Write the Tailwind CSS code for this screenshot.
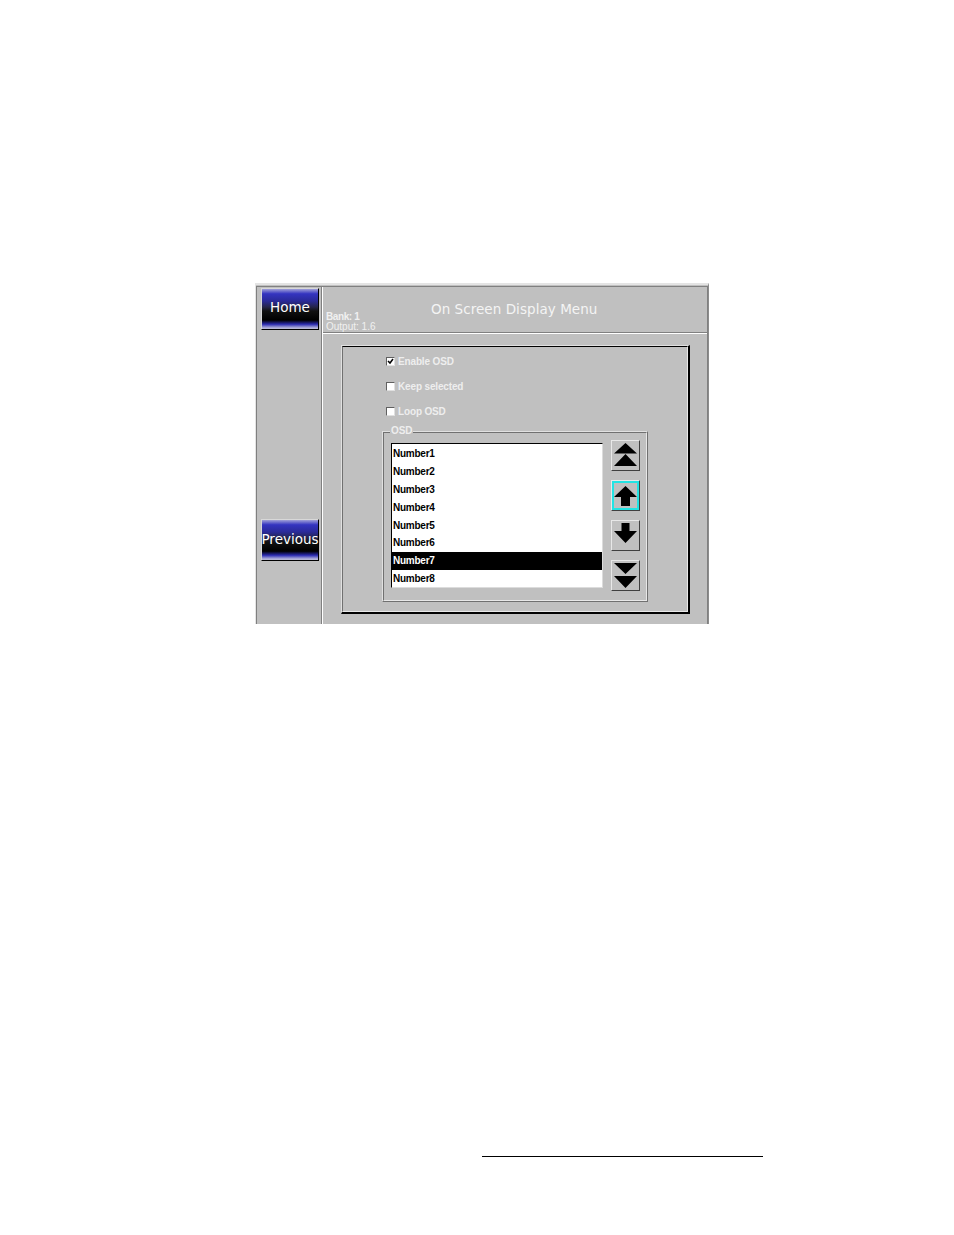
<!DOCTYPE html>
<html lang="en">
<head>
    <meta charset="UTF-8">
    <title>On Screen Display Menu</title>
    <script src="https://cdn.jsdelivr.net/npm/@tailwindcss/browser@4"></script>
</head>
<body class="bg-white w-[954px] h-[1235px] overflow-hidden font-['Liberation_Sans',sans-serif]">
    <div class="pt-[283px] pl-[255px]">
        <!-- outer window -->
        <div class="w-[454px] h-[341px] bg-[#c0c0c0] border-t-2 border-l border-r border-[#e4e4e4] border-r-[#8c8c8c] pt-px">
            <div class="h-full flex border-t border-l border-r border-[#808080]">
                <!-- sidebar -->
                <div class="w-[65px] h-full flex flex-col pl-[4px] pt-px border-r border-[#808080] shrink-0">
                    <div class="w-[58px] h-[42px] flex items-center justify-center pb-[3px] text-white font-['DejaVu_Sans',sans-serif] text-[13.5px] border border-[#d8d8d8] border-r-black border-b-black bg-[linear-gradient(#a0a0d8_0%,#3434c0_12%,#2a2a98_30%,#24244a_45%,#111_55%,#000_78%,#2a2ab0_88%,#a0a0d8_96%,#c0c0d8_100%)]">Home</div>
                    <div class="w-[58px] h-[42px] mt-[189px] flex items-center justify-center pb-[2px] text-white font-['DejaVu_Sans',sans-serif] text-[13.5px] border border-[#d8d8d8] border-r-black border-b-black bg-[linear-gradient(#a0a0d8_0%,#3434c0_12%,#2a2a98_30%,#24244a_45%,#111_55%,#000_78%,#2a2ab0_88%,#a0a0d8_96%,#c0c0d8_100%)]">Previous</div>
                </div>
                <div class="flex-1 border-l border-white flex flex-col">
                    <!-- header -->
                    <div class="h-[46px] flex border-b border-[#808080]">
                        <div class="w-[108px] pl-[3px] pt-[25px] text-[10px] leading-[10px] text-[#f0f0f0]">
                            <div class="font-bold tracking-[-0.4px]">Bank: 1</div>
                            <div>Output: 1.6</div>
                        </div>
                        <div class="pt-[13px] text-[13.5px] leading-[18px] tracking-[0.05px] text-[#f4f4f4] font-['DejaVu_Sans',sans-serif]">On Screen Display Menu</div>
                    </div>
                    <div class="border-t border-white pl-[18px] pt-[11px]">
                        <!-- settings panel -->
                        <div class="w-[349px] h-[269px] border border-[#e0e0e0] border-r-2 border-b-2 border-r-black border-b-black">
                            <div class="h-full border border-t-black border-l-[#707070] border-r-[#e8e8e8] border-b-[#e8e8e8] pl-[43px] pt-[9px]">
                                <div class="flex flex-col gap-[13px] text-[10px] leading-[12px] tracking-[-0.15px] font-bold text-[#eeeeee]">
                                    <label class="flex items-center gap-[3px]">
                                        <span class="w-[9px] h-[9px] -mt-px bg-white border border-[#606060] border-r-[#e0e0e0] border-b-[#e0e0e0] flex items-center justify-center">
                                            <svg class="w-[7px] h-[7px]" viewBox="0 0 7 7"><path d="M1 3l2 2 3-4" fill="none" stroke="#000" stroke-width="1.5"/></svg>
                                        </span>
                                        Enable OSD
                                    </label>
                                    <label class="flex items-center gap-[3px]">
                                        <span class="w-[9px] h-[9px] -mt-px bg-white border border-[#606060] border-r-[#e0e0e0] border-b-[#e0e0e0]"></span>
                                        Keep selected
                                    </label>
                                    <label class="flex items-center gap-[3px]">
                                        <span class="w-[9px] h-[9px] -mt-px bg-white border border-[#606060] border-r-[#e0e0e0] border-b-[#e0e0e0]"></span>
                                        Loop OSD
                                    </label>
                                </div>
                                <!-- OSD group box -->
                                <div class="relative mt-[13px] -ml-[4px] w-[266px] h-[171px] border border-[#e0e0e0] border-r-[#707070] border-b-[#707070]">
                                    <span class="absolute -top-[7px] left-[7px] px-[1px] bg-[#c0c0c0] text-[10px] leading-[12px] tracking-[-0.15px] font-bold text-[#eeeeee]">OSD</span>
                                    <div class="h-full border border-[#707070] border-r-[#e8e8e8] border-b-[#e8e8e8] flex pl-[7px] pt-[10px]">
                                        <!-- list -->
                                        <div class="w-[212px] h-[145px] pt-px bg-white border border-t-black border-l-black border-b-[#dcdcdc] border-r-[#dcdcdc] text-[10px] tracking-[-0.25px] font-bold text-black">
                                            <div class="h-[17.8px] flex items-center pl-px">Number1</div>
                                            <div class="h-[17.8px] flex items-center pl-px">Number2</div>
                                            <div class="h-[17.8px] flex items-center pl-px">Number3</div>
                                            <div class="h-[17.8px] flex items-center pl-px">Number4</div>
                                            <div class="h-[17.8px] flex items-center pl-px">Number5</div>
                                            <div class="h-[17.8px] flex items-center pl-px">Number6</div>
                                            <div class="h-[17.8px] flex items-center pl-px bg-black text-white">Number7</div>
                                            <div class="h-[17.8px] flex items-center pl-px">Number8</div>
                                        </div>
                                        <!-- move buttons -->
                                        <div class="ml-[8px] -mt-[3px] flex flex-col gap-[9px]">
                                            <button class="w-[29px] h-[31px] bg-[#c0c0c0] border border-[#e8e8e8] border-r-[#404040] border-b-[#404040]">
                                                <svg class="w-[27px] h-[29px]" viewBox="0 0 27 29"><path d="M13.5 2L25 12.5H2zM13.5 13L25 25H2z" fill="#000"/></svg>
                                            </button>
                                            <button class="w-[29px] h-[31px] bg-[#c0c0c0] border border-[#e8e8e8] border-r-[#404040] border-b-[#404040]">
                                                <span class="block h-full border-2 border-[#22e4e4]">
                                                    <svg class="w-[23px] h-[25px]" viewBox="0 0 23 25"><path d="M11.5 3L23 14H16V23H7V14H0z" fill="#000"/></svg>
                                                </span>
                                            </button>
                                            <button class="w-[29px] h-[31px] bg-[#c0c0c0] border border-[#e8e8e8] border-r-[#404040] border-b-[#404040]">
                                                <svg class="w-[27px] h-[29px]" viewBox="0 0 27 29"><path d="M9.5 2H17.5V10H25L13.5 22L2 10H9.5z" fill="#000"/></svg>
                                            </button>
                                            <button class="w-[29px] h-[31px] bg-[#c0c0c0] border border-[#e8e8e8] border-r-[#404040] border-b-[#404040]">
                                                <svg class="w-[27px] h-[29px]" viewBox="0 0 27 29"><path d="M2 2H25L13.5 13zM2 15H25L13.5 27z" fill="#000"/></svg>
                                            </button>
                                        </div>
                                    </div>
                                </div>
                            </div>
                        </div>
                    </div>
                </div>
            </div>
        </div>
    </div>
    <!-- footer rule -->
    <div class="ml-[482px] mt-[532px] w-[281px] h-px bg-black"></div>
</body>
</html>
